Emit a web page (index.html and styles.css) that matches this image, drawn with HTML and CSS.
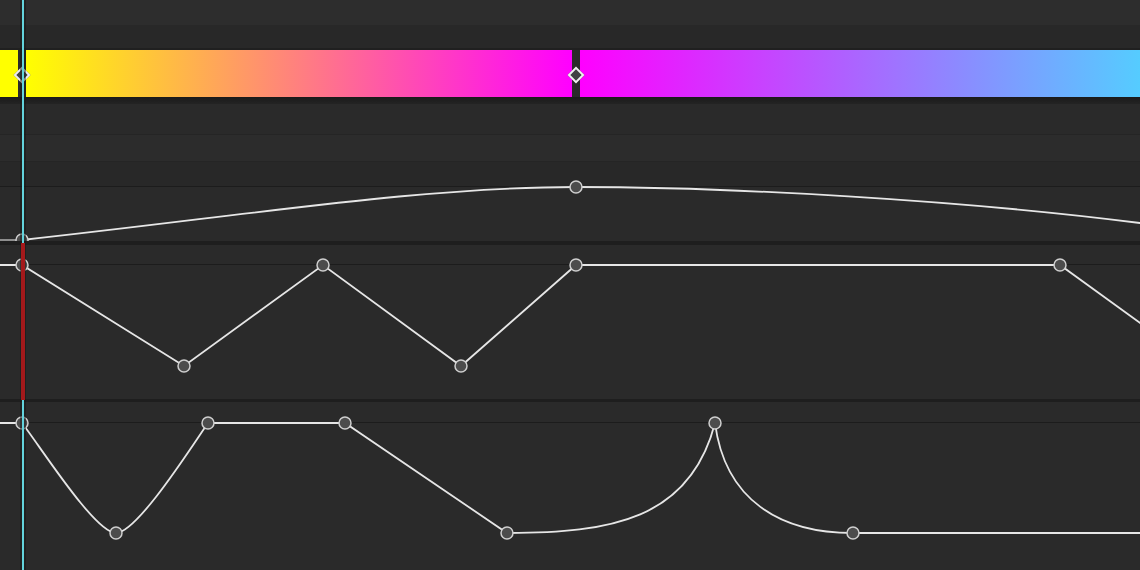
FILE: index.html
```html
<!DOCTYPE html>
<html lang="en">
<head>
    <meta charset="UTF-8">
    <meta name="viewport" content="width=device-width, initial-scale=1.0">
    <title>Curve Editor</title>
    <link rel="stylesheet" href="styles.css">
</head>
<body>
    <div class="timeline">
        <div class="ruler"></div>
        <div class="ruler-sub"></div>

        <!-- colour track -->
        <div class="gradient-track">
            <div class="seg seg-start"></div>
            <div class="seg seg-warm"></div>
            <div class="seg seg-cool"></div>
            <span class="key" style="left: 22px"></span>
            <span class="key" style="left: 576px"></span>
        </div>
        <div class="track-shadow"></div>
        <div class="row row-a"></div>
        <div class="row row-b"></div>
        <div class="row row-c"></div>

        <!-- track 1: smooth ease -->
        <svg class="curve" width="1140" height="54" viewBox="0 187 1140 54">
            <defs>
                <clipPath id="clipTrack1"><rect x="0" y="170" width="1140" height="71"/></clipPath>
            </defs>
            <g clip-path="url(#clipTrack1)">
                <path class="hold" d="M0 240 H22"/>
                <path class="line" d="M22 240 C250 215 420 187 576 187 C730 187 960 200 1140 223 L1160 226"/>
                <circle class="node" cx="22" cy="240" r="6"/>
                <circle class="node" cx="576" cy="187" r="6"/>
            </g>
        </svg>
        <div class="band"></div>
        <div class="header"></div>

        <!-- track 2: linear -->
        <svg class="curve" width="1140" height="134" viewBox="0 265 1140 134">
            <path class="line" d="M0 265 H22 L184 366 L323 265 L461 366 L576 265 H1060 L1150 330"/>
            <circle class="node" cx="22" cy="265" r="6"/>
            <circle class="node" cx="184" cy="366" r="6"/>
            <circle class="node" cx="323" cy="265" r="6"/>
            <circle class="node" cx="461" cy="366" r="6"/>
            <circle class="node" cx="576" cy="265" r="6"/>
            <circle class="node" cx="1060" cy="265" r="6"/>
        </svg>
        <div class="band band-thin"></div>
        <div class="header header-tall"></div>

        <!-- track 3: mixed -->
        <svg class="curve" width="1140" height="147" viewBox="0 423 1140 147">
            <path class="line" d="M0 423 H22 C40 446 95 533 116 533 C137 533 192 446 208 423 H345 L507 533 C610 533 690 520 715 423 C725 500 780 533 853 533 H1140"/>
            <circle class="node" cx="22" cy="423" r="6"/>
            <circle class="node" cx="116" cy="533" r="6"/>
            <circle class="node" cx="208" cy="423" r="6"/>
            <circle class="node" cx="345" cy="423" r="6"/>
            <circle class="node" cx="507" cy="533" r="6"/>
            <circle class="node" cx="715" cy="423" r="6"/>
            <circle class="node" cx="853" cy="533" r="6"/>
        </svg>

        <div class="playhead"></div>
        <div class="playhead-active"></div>
    </div>
</body>
</html>
```

FILE: styles.css
```css
body { margin: 0; background: #2a2a2a; overflow: hidden; }

.timeline { position: relative; width: 1140px; height: 570px; display: flex; flex-direction: column; }

.ruler { height: 25px; background: #2d2d2d; }
.ruler-sub { height: 23px; background: #282828; }

.gradient-track { position: relative; height: 47px; display: flex; gap: 8px; background: #2a2a2a; border-top: 2px solid #202020; }
.seg { height: 100%; }
.seg-start { width: 18px; background: #ffff00; }
.seg-warm { width: 546px; background: linear-gradient(to right, #ffff00, #ff00ff); }
.seg-cool { flex: 1; background: linear-gradient(to right, #ff00ff, #55ccff); }

.key { position: absolute; top: 25px; width: 8px; height: 8px; margin: -6px 0 0 -6px; background: #424242; border: 2px solid #f0f0f0; transform: rotate(45deg); }

.track-shadow { height: 7px; background: linear-gradient(#1a1a1a, #242424); }
.row { border-bottom: 1px solid #252525; }
.row-a { height: 30px; background: #2a2a2a; }
.row-b { height: 26px; background: #2c2c2c; }
.row-c { height: 24px; background: #282828; border-bottom-color: #1c1c1c; }

.band { height: 4px; background: #1e1e1e; }
.band-thin { height: 3px; }
.header { height: 19px; background: #2a2a2a; border-bottom: 1px solid #1c1c1c; }
.header-tall { height: 20px; }

.curve { display: block; flex: none; overflow: visible; }
.line { fill: none; stroke: #e6e6e6; stroke-width: 1.8; }
.hold { fill: none; stroke: #9a9a9a; stroke-width: 1.8; }
.node { fill: #4c4c4c; stroke: #cfcfcf; stroke-width: 1.5; }

.playhead { position: absolute; left: 22px; top: 0; width: 2px; height: 570px; background: #63d3dc; box-shadow: 0 0 0 2px rgba(20, 20, 20, 0.45); }
.playhead-active { position: absolute; left: 21px; top: 243px; width: 4px; height: 157px; background: #a3191b; }
```
